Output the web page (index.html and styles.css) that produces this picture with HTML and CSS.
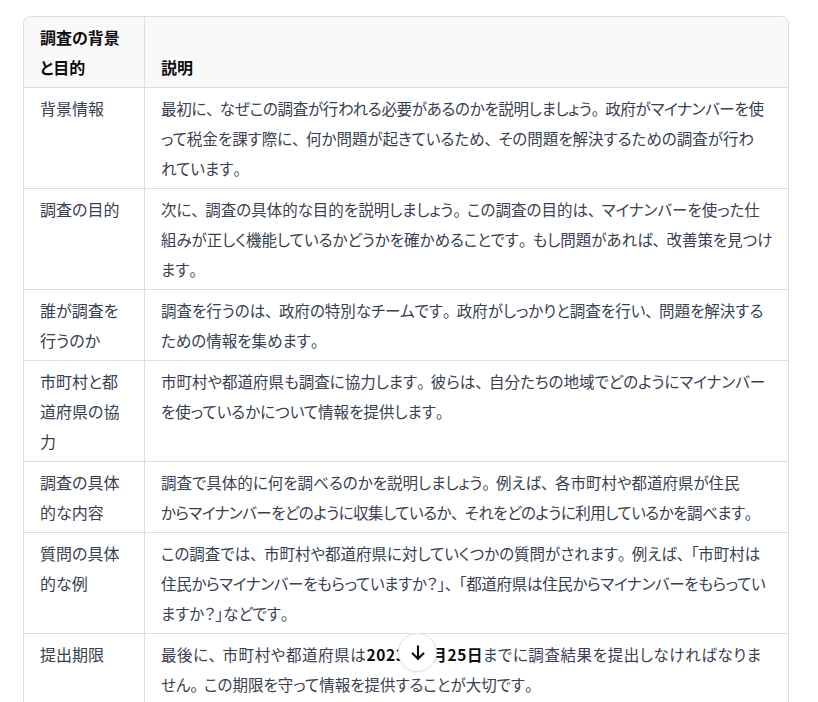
FILE: index.html
```html
<!DOCTYPE html>
<html lang="ja">
<head>
<meta charset="utf-8">
<title>調査の背景と目的</title>
<link rel="stylesheet" href="styles.css">
</head>
<body>
<main class="page">
  <div class="table-wrap">
    <table class="info-table">
      <colgroup><col class="col-key"><col class="col-desc"></colgroup>
      <thead>
        <tr><th>調査の背景と目的</th><th>説明</th></tr>
      </thead>
      <tbody>
        <tr>
          <td>背景情報</td>
          <td class="desc"><span class="ln snug">最初に<span class="pu">、</span>なぜこの調査が行われる必要があるのかを説明しましょう<span class="pu">。</span>政府がマイナンバーを使</span><span class="ln">って税金を課す際に<span class="pu">、</span>何か問題が起きているため<span class="pu">、</span>その問題を解決するための調査が行わ</span><span class="ln">れています<span class="pu">。</span></span></td>
        </tr>
        <tr>
          <td>調査の目的</td>
          <td class="desc"><span class="ln">次に<span class="pu">、</span>調査の具体的な目的を説明しましょう<span class="pu">。</span>この調査の目的は<span class="pu">、</span>マイナンバーを使った仕</span><span class="ln">組みが正しく機能しているかどうかを確かめることです<span class="pu">。</span>もし問題があれば<span class="pu">、</span>改善策を見つけ</span><span class="ln">ます<span class="pu">。</span></span></td>
        </tr>
        <tr>
          <td>誰が調査を行うのか</td>
          <td class="desc"><span class="ln">調査を行うのは<span class="pu">、</span>政府の特別なチームです<span class="pu">。</span>政府がしっかりと調査を行い<span class="pu">、</span>問題を解決する</span><span class="ln">ための情報を集めます<span class="pu">。</span></span></td>
        </tr>
        <tr>
          <td>市町村と都道府県の協力</td>
          <td class="desc"><span class="ln">市町村や都道府県も調査に協力します<span class="pu">。</span>彼らは<span class="pu">、</span>自分たちの地域でどのようにマイナンバー</span><span class="ln">を使っているかについて情報を提供します<span class="pu">。</span></span></td>
        </tr>
        <tr>
          <td>調査の具体的な内容</td>
          <td class="desc"><span class="ln">調査で具体的に何を調べるのかを説明しましょう<span class="pu">。</span>例えば<span class="pu">、</span>各市町村や都道府県が住民</span><span class="ln tight">からマイナンバーをどのように収集しているか<span class="pu">、</span>それをどのように利用しているかを調べます<span class="pu">。</span></span></td>
        </tr>
        <tr>
          <td>質問の具体的な例</td>
          <td class="desc"><span class="ln">この調査では<span class="pu">、</span>市町村や都道府県に対していくつかの質問がされます<span class="pu">。</span>例えば<span class="pu">、</span>「市町村は</span><span class="ln snug">住民からマイナンバーをもらっていますか？」<span class="pu">、</span>「都道府県は住民からマイナンバーをもらってい</span><span class="ln">ますか？」などです<span class="pu">。</span></span></td>
        </tr>
        <tr>
          <td>提出期限</td>
          <td class="desc"><span class="ln wide">最後に<span class="pu">、</span>市町村や都道府県は<strong>2023年7月25日</strong>までに調査結果を提出しなければなりま</span><span class="ln">せん<span class="pu">。</span>この期限を守って情報を提供することが大切です<span class="pu">。</span></span></td>
        </tr>
      </tbody>
    </table>
  </div>
  <button class="scroll-btn" aria-label="一番下へスクロール">
    <svg width="20" height="20" viewBox="0 0 24 24" fill="none" stroke="currentColor" stroke-width="2.5" stroke-linecap="round" stroke-linejoin="round"><path d="M12 4v15"/><path d="M5.5 12.5 12 19l6.5-6.5"/></svg>
  </button>
</main>
</body>
</html>
```
FILE: styles.css
```css
html, body {
  margin: 0;
  padding: 0;
  background: #ffffff;
}
body {
  font-family: "Noto Sans CJK JP", "Noto Sans", sans-serif;
  font-size: 16px;
  line-height: 30px;
  color: #374151;
  font-feature-settings: "palt";
  overflow: hidden;
  height: 702px;
}
.page {
  position: relative;
  padding: 16px 30px 0 23px;
}
.table-wrap {
  width: 766px;
  border: 1px solid #dcdce4;
  border-bottom: none;
  border-radius: 8px 8px 0 0;
  overflow: hidden;
  box-sizing: border-box;
}
.info-table {
  width: 100%;
  border-collapse: separate;
  border-spacing: 0;
  table-layout: fixed;
}
.col-key { width: 120px; }
.info-table th,
.info-table td {
  padding: 5px 16px;
  text-align: left;
  border-bottom: 1px solid #dcdce4;
}
.info-table th + th,
.info-table td + td {
  border-left: 1px solid #dcdce4;
}
.info-table th {
  background: #f9f9fa;
  font-weight: 700;
  color: #0d0d0d;
  vertical-align: bottom;
}
.info-table td {
  vertical-align: top;
}
.desc {
  font-size: 15.5px;
}
.desc .ln {
  display: block;
  white-space: nowrap;
}
.desc .pu {
  letter-spacing: 6px;
}
.desc .snug {
  letter-spacing: -0.3px;
}
.desc .tight {
  letter-spacing: -0.5px;
}
.desc .wide {
  letter-spacing: 0.6px;
}
.desc strong {
  font-weight: 700;
  color: #0d0d0d;
}
.scroll-btn {
  position: absolute;
  left: 398px;
  top: 633px;
  width: 39px;
  height: 39px;
  border-radius: 50%;
  border: 1px solid #e3e3e3;
  background: #ffffff;
  color: #0d0d0d;
  display: flex;
  align-items: center;
  justify-content: center;
  padding: 0;
  box-shadow: 0 1px 2px rgba(0,0,0,0.04);
}
```
